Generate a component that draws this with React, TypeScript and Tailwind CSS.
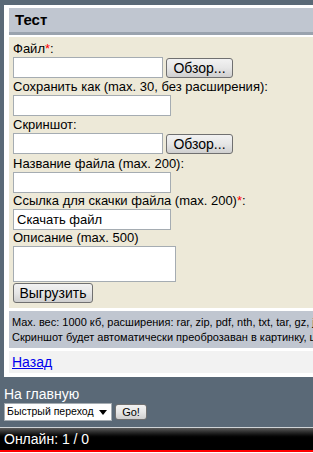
import React from 'react';

function FileField() {
  return (
    <div className="flex items-center gap-[3px]">
      <div className="w-[150px] h-[21px] bg-white border border-[#a5acb2]"></div>
      <Btn className="w-[67px] h-[20px] text-[14px]">Обзор...</Btn>
    </div>
  );
}

function Btn({ children, className }: { children: React.ReactNode; className?: string }) {
  return (
    <button
      type="button"
      className={
        'flex items-center justify-center rounded-[3px] border border-[#707070] bg-gradient-to-b from-[#f2f2f2] via-[#e6e6e6] to-[#cfcfcf] text-black leading-none ' +
        (className ?? '')
      }
    >
      {children}
    </button>
  );
}

function TextField({ value }: { value?: string }) {
  return (
    <div className="w-[158px] h-[21px] bg-white border border-[#a5acb2] px-[3px] text-[13px] leading-[19px] text-black">
      {value}
    </div>
  );
}

function Label({ children, req }: { children: React.ReactNode; req?: boolean }) {
  return (
    <div className="text-[13px] leading-[16px] text-black whitespace-nowrap">
      {children}
      {req && <span className="text-[#ff0000]">*</span>}
      {req && ':'}
    </div>
  );
}

export default function App() {
  return (
    <div
      className="w-[313px] h-[453px] overflow-hidden bg-[#5a6977] flex flex-col"
      style={{ fontFamily: '"Liberation Sans", Arial, sans-serif' }}
    >
      <div className="pt-[5px] pl-[4px]">
        <div className="w-[400px] bg-white pt-[3px] pl-[5px] pb-[4px]">
          <div className="h-[27px] bg-[#c0c6d0] border-b-[3px] border-[#9aa3ae] pl-[6px] flex items-center">
            <span className="text-[15px] font-bold text-black">Тест</span>
          </div>
          <div className="mt-[2px] bg-[#ede9d8] pl-[4px] pt-[4px] pb-[5px]">
            <Label req>Файл</Label>
            <FileField />
            <div className="mt-[1px]">
              <Label>Сохранить как (max. 30, без расширения):</Label>
            </div>
            <TextField />
            <div className="mt-[1px]">
              <Label>Скриншот:</Label>
            </div>
            <FileField />
            <div className="mt-[2px]">
              <Label>Название файла (max. 200):</Label>
            </div>
            <TextField />
            <div>
              <Label req>Ссылка для скачки файла (max. 200)</Label>
            </div>
            <TextField value="Скачать файл" />
            <div>
              <Label>Описание (max. 500)</Label>
            </div>
            <div className="w-[163px] h-[36px] bg-white border border-[#a5acb2]"></div>
            <Btn className="mt-[1px] w-[80px] h-[20px] text-[14px]">Выгрузить</Btn>
          </div>
          <div className="mt-[3px] bg-[#c0c6d0] pl-[3px] pt-[4px] pb-[3px] text-[11px] leading-[15px] text-black whitespace-nowrap">
            <div>Max. вес: 1000 кб, расширения: rar, zip, pdf, nth, txt, tar, gz, jpg</div>
            <div>Скриншот будет автоматически преоброзаван в картинку, шириной</div>
          </div>
          <div className="mt-[3px] bg-[#f2f2f2] h-[22px] pl-[3px] flex items-center">
            <a href="#" className="text-[14px] text-[#0000ee] underline">Назад</a>
          </div>
        </div>
      </div>
      <div className="pl-[4px] pt-[9px]">
        <div className="text-[14px] leading-[16px] text-white">На главную</div>
        <div className="flex items-center gap-[3px] mt-[1px]">
          <div className="w-[108px] h-[18px] bg-white border border-[#a5acb2] flex items-center justify-between pl-[2px] pr-[4px]">
            <span className="text-[10.5px] text-black whitespace-nowrap">Быстрый переход</span>
            <svg width="8" height="5" viewBox="0 0 8 5">
              <path d="M0 0h8L4 5z" fill="#000" />
            </svg>
          </div>
          <Btn className="w-[32px] h-[16px] text-[11px]">Go!</Btn>
        </div>
      </div>
      <div className="mt-[6px] border-t border-[#cfd3d6] h-[23px] bg-gradient-to-b from-[#5a5a5a] via-[#000000] to-[#000000] pl-[4px] flex items-center">
        <span className="text-[14px] text-white">Онлайн: 1 / 0</span>
      </div>
      <div className="h-[2px] bg-[#ff0000]"></div>
      <div className="flex-1 bg-white"></div>
    </div>
  );
}
